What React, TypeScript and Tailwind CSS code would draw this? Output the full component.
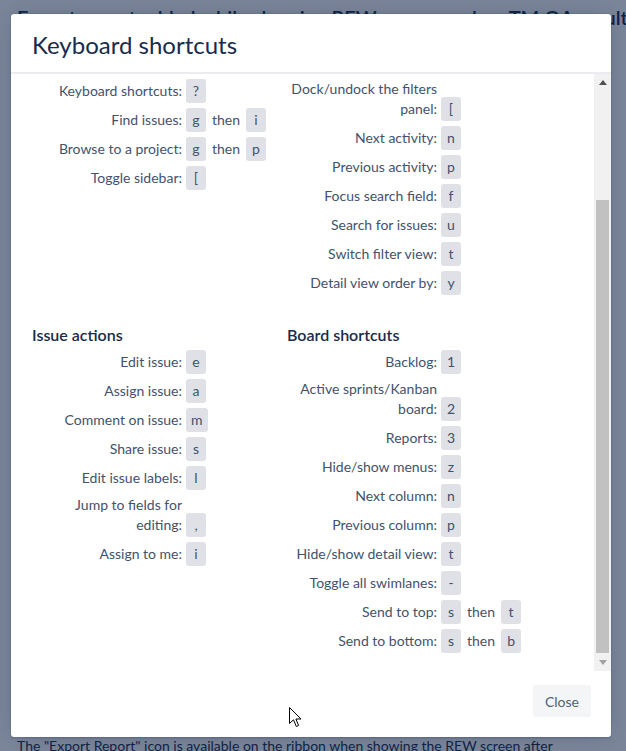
import React from 'react';

type Shortcut = { label: string; keys: string[] };
type Section = { title: string; items: Shortcut[] };

const topLeft: Section = {
  title: 'Global shortcuts',
  items: [
    { label: 'Go to dashboard', keys: ['g', 'd'] },
    { label: 'Quick search', keys: ['/'] },
    { label: 'Keyboard shortcuts', keys: ['?'] },
    { label: 'Find issues', keys: ['g', 'i'] },
    { label: 'Browse to a project', keys: ['g', 'p'] },
    { label: 'Toggle sidebar', keys: ['['] },
  ],
};

const topRight: Section = {
  title: 'Navigating issues',
  items: [
    { label: 'Next issue', keys: ['j'] },
    { label: 'Previous issue', keys: ['k'] },
    { label: 'Dock/undock the filters panel', keys: ['['] },
    { label: 'Next activity', keys: ['n'] },
    { label: 'Previous activity', keys: ['p'] },
    { label: 'Focus search field', keys: ['f'] },
    { label: 'Search for issues', keys: ['u'] },
    { label: 'Switch filter view', keys: ['t'] },
    { label: 'Detail view order by', keys: ['y'] },
  ],
};

const issueActions: Section = {
  title: 'Issue actions',
  items: [
    { label: 'Edit issue', keys: ['e'] },
    { label: 'Assign issue', keys: ['a'] },
    { label: 'Comment on issue', keys: ['m'] },
    { label: 'Share issue', keys: ['s'] },
    { label: 'Edit issue labels', keys: ['l'] },
    { label: 'Jump to fields for editing', keys: [','] },
    { label: 'Assign to me', keys: ['i'] },
  ],
};

const boardShortcuts: Section = {
  title: 'Board shortcuts',
  items: [
    { label: 'Backlog', keys: ['1'] },
    { label: 'Active sprints/Kanban board', keys: ['2'] },
    { label: 'Reports', keys: ['3'] },
    { label: 'Hide/show menus', keys: ['z'] },
    { label: 'Next column', keys: ['n'] },
    { label: 'Previous column', keys: ['p'] },
    { label: 'Hide/show detail view', keys: ['t'] },
    { label: 'Toggle all swimlanes', keys: ['-'] },
    { label: 'Send to top', keys: ['s', 't'] },
    { label: 'Send to bottom', keys: ['s', 'b'] },
  ],
};

const Key: React.FC<{ children: React.ReactNode }> = ({ children }) => (
  <kbd className="inline-flex h-6 min-w-[20px] items-center justify-center rounded-[3px] bg-[#dfe1e6] px-[5px] font-['Lato',sans-serif] text-[14px] leading-none text-[#42526e]">
    {children}
  </kbd>
);

const Row: React.FC<{ item: Shortcut }> = ({ item }) => (
  <div className="flex items-end gap-1">
    <div className="w-[150px] shrink-0 pb-[2px] text-right leading-5">{item.label}:</div>
    <div className="flex items-center gap-[6px]">
      {item.keys.map((k, i) => (
        <React.Fragment key={i}>
          {i > 0 && <span className="leading-5">then</span>}
          <Key>{k}</Key>
        </React.Fragment>
      ))}
    </div>
  </div>
);

const ShortcutSection: React.FC<{ section: Section }> = ({ section }) => (
  <section className="flex flex-col gap-[5px]">
    <h3 className="text-[16px] font-semibold leading-5 text-[#172b4d]">{section.title}</h3>
    {section.items.map((item) => (
      <Row key={item.label} item={item} />
    ))}
  </section>
);

export default function App() {
  return (
    <div className="relative h-[751px] w-full overflow-hidden bg-white font-['Lato',sans-serif]">
      {/* page behind the dialog */}
      <div className="flex flex-col px-[17px] text-[#172b4d]">
        <h1 className="whitespace-nowrap pt-[5px] text-[20px] font-semibold leading-6">
          Export report added while showing REW screen and on TM QA results
        </h1>
        <p className="mt-[705px] whitespace-nowrap text-[14px] leading-6">
          The "Export Report" icon is available on the ribbon when showing the REW screen after
        </p>
      </div>

      <div className="absolute inset-0 bg-[rgba(9,30,66,0.54)]" />

      <div className="absolute left-[11px] top-[14px] flex h-[723px] w-[600px] flex-col overflow-hidden rounded-[3px] bg-white shadow-[0_0_0_1px_rgba(9,30,66,0.08),0_2px_1px_rgba(9,30,66,0.08),0_0_20px_-6px_rgba(9,30,66,0.31)]">
        <header className="h-[60px] shrink-0 border-b-2 border-[#ebecf0] pl-[21px] pt-[15px]">
          <h2 className="text-[24px] font-normal leading-8 text-[#172b4d]">Keyboard shortcuts</h2>
        </header>

        <div className="flex h-[597px] shrink-0">
          <div className="flex flex-1 flex-col justify-end overflow-hidden">
            <div className="grid shrink-0 grid-cols-[255px_255px] gap-y-[30px] pb-[18px] pl-[21px] pt-5 text-[14px] text-[#42526e]">
              <ShortcutSection section={topLeft} />
              <ShortcutSection section={topRight} />
              <ShortcutSection section={issueActions} />
              <ShortcutSection section={boardShortcuts} />
            </div>
          </div>

          {/* scrollbar */}
          <div className="flex w-[17px] shrink-0 flex-col bg-[#f1f1f1]">
            <div className="flex h-[17px] items-center justify-center">
              <svg width="8" height="5" viewBox="0 0 8 5">
                <path d="M0 5 L4 0 L8 5 Z" fill="#505050" />
              </svg>
            </div>
            <div className="flex flex-1 flex-col justify-end px-[2px] pb-[1px]">
              <div className="h-[453px] bg-[#c1c1c1]" />
            </div>
            <div className="flex h-[17px] items-center justify-center">
              <svg width="8" height="5" viewBox="0 0 8 5">
                <path d="M0 0 L8 0 L4 5 Z" fill="#a3a3a3" />
              </svg>
            </div>
          </div>
        </div>

        <footer className="flex flex-1 justify-end pr-5 pt-[14px]">
          <button className="h-8 rounded-[3px] bg-[#f4f5f7] px-3 text-[14px] text-[#505f79]">Close</button>
        </footer>
      </div>

      {/* mouse pointer */}
      <svg className="absolute left-[289px] top-[707px]" width="13" height="21" viewBox="0 0 13 21">
        <path d="M0.5 0.5 L0.5 16.5 L4.5 12.8 L7.3 19.5 L9.6 18.5 L6.9 12 L12 12 Z" fill="#fff" stroke="#000" strokeWidth="1" strokeLinejoin="round" />
      </svg>
    </div>
  );
}
